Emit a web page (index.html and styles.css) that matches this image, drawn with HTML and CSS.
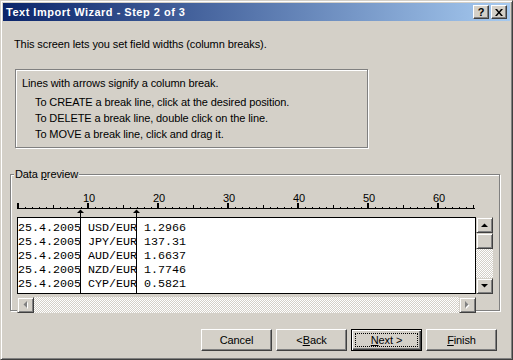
FILE: index.html
```html
<html lang="en">
  <head>
    <meta charset="utf-8">
    <title>Text Import Wizard - Step 2 of 3</title>
    <link rel="stylesheet" href="styles.css">
  </head>

  <body>
    <div class="window">
      <div class="titlebar">
        <span class="title">Text Import Wizard - Step 2 of 3</span>
        <div class="caption-buttons">
          <span class="cap-btn help">?</span>
          <span class="cap-btn close">
            <svg width="8" height="7" viewBox="0 0 8 7"><path d="M0 0h2l2 2.4 2-2.4h2l-3 3.5 3 3.5h-2l-2-2.4-2 2.4h-2l3-3.5z"/></svg>
          </span>
        </div>
      </div>

      <div class="content">
        <p class="intro">This screen lets you set field widths (column breaks).</p>

        <div class="hint-box">
          <p class="hint-head">Lines with arrows signify a column break.</p>
          <p class="hint">To CREATE a break line, click at the desired position.</p>
          <p class="hint">To DELETE a break line, double click on the line.</p>
          <p class="hint">To MOVE a break line, click and drag it.</p>
        </div>

        <fieldset class="preview-group">
          <legend>Data <u>p</u>review</legend>

          <!-- ruler: one column = 7px, col 0 at x=1 -->
          <svg class="ruler" width="458" height="33" viewBox="0 0 458 33">
            <defs>
              <pattern id="minor" patternUnits="userSpaceOnUse" x="1" y="0" width="7" height="33">
                <rect x="0" y="23" width="1" height="1"/>
              </pattern>
              <pattern id="five" patternUnits="userSpaceOnUse" x="36" y="0" width="70" height="33">
                <rect x="0" y="21" width="1" height="3"/>
              </pattern>
              <pattern id="ten" patternUnits="userSpaceOnUse" x="0" y="0" width="70" height="33">
                <rect x="0" y="19" width="2" height="5"/>
              </pattern>
            </defs>
            <rect x="0" y="0" width="458" height="33" fill="url(#minor)"/>
            <rect x="0" y="0" width="458" height="33" fill="url(#five)"/>
            <rect x="0" y="0" width="458" height="33" fill="url(#ten)"/>
            <rect x="0" y="24" width="458" height="1"/>
            <g class="ruler-num">
              <text x="72" y="18">10</text>
              <text x="142" y="18">20</text>
              <text x="212" y="18">30</text>
              <text x="282" y="18">40</text>
              <text x="352" y="18">50</text>
              <text x="422" y="18">60</text>
            </g>
            <polygon points="60,29 67,29 63.5,25.5"/>
            <rect x="63" y="29" width="1" height="4"/>
            <polygon points="116,29 123,29 119.5,25.5"/>
            <rect x="119" y="29" width="1" height="4"/>
          </svg>

          <div class="preview">
<pre class="data">25.4.2005 USD/EUR 1.2966
25.4.2005 JPY/EUR 137.31
25.4.2005 AUD/EUR 1.6637
25.4.2005 NZD/EUR 1.7746
25.4.2005 CYP/EUR 0.5821</pre>
            <div class="vscroll">
              <span class="sb-btn">
                <svg width="7" height="4" viewBox="0 0 7 4"><polygon points="0,4 7,4 3.5,0.5"/></svg>
              </span>
              <span class="sb-btn thumb"></span>
              <span class="track"></span>
              <span class="sb-btn">
                <svg width="7" height="4" viewBox="0 0 7 4"><polygon points="0,0 7,0 3.5,3.5"/></svg>
              </span>
            </div>
            <div class="hscroll">
              <span class="sb-btn">
                <svg width="5" height="8" viewBox="0 0 5 8"><polygon class="hl" points="5,1 5,8 1.5,4.5"/><polygon class="gray" points="4,0 4,7 0.5,3.5"/></svg>
              </span>
              <span class="track"></span>
              <span class="sb-btn">
                <svg width="5" height="8" viewBox="0 0 5 8"><polygon class="hl" points="1,1 1,8 4.5,4.5"/><polygon class="gray" points="0,0 0,7 3.5,3.5"/></svg>
              </span>
            </div>
          </div>
        </fieldset>

        <div class="buttons">
          <span class="btn">Cancel</span>
          <span class="btn">&lt; <u>B</u>ack</span>
          <span class="btn default"><span class="focus"><u>N</u>ext &gt;</span></span>
          <span class="btn"><u>F</u>inish</span>
        </div>
      </div>
    </div>
  </body>
</html>
```

FILE: styles.css
```css
body {
  margin: 0;
  font-family: "Liberation Sans", Arial, sans-serif;
  font-size: 11px;
  letter-spacing: -0.1px;
  color: #000;
}

* {
  box-sizing: border-box;
}

p {
  margin: 0;
}

.window {
  width: 513px;
  height: 360px;
  background: #d4d0c8;
  border: 1px solid;
  border-color: #d4d0c8 #404040 #404040 #d4d0c8;
  box-shadow: inset 1px 1px #fff, inset -1px -1px #808080;
  padding: 2px;
  display: flex;
  flex-direction: column;
}

/* title bar */
.titlebar {
  height: 18px;
  display: flex;
  align-items: center;
  padding: 0 3px 0 3px;
  background: linear-gradient(to right, #0a246a, #a6caf0);
}

.title {
  color: #fff;
  font-weight: bold;
  font-size: 11px;
  letter-spacing: 0.5px;
}

.caption-buttons {
  margin-left: auto;
  display: flex;
  gap: 2px;
}

.cap-btn {
  width: 16px;
  height: 14px;
  display: flex;
  align-items: center;
  justify-content: center;
  background: #d4d0c8;
  border: 1px solid;
  border-color: #fff #404040 #404040 #fff;
  box-shadow: inset -1px -1px #808080;
}

.cap-btn.help {
  font-weight: bold;
  font-size: 11px;
  line-height: 12px;
}

/* content */
.content {
  flex: 1;
  display: flex;
  flex-direction: column;
}

.intro {
  margin: 17px 0 0 11px;
  line-height: 13px;
}

.hint-box {
  margin: 18px 0 0 12px;
  width: 353px;
  height: 79px;
  border: 1px solid #808080;
  box-shadow: inset 1px 1px #fff, 1px 1px #fff;
  padding: 6px 0 0 6px;
}

.hint-head {
  line-height: 14px;
  margin-bottom: 4px;
}

.hint {
  line-height: 16px;
  padding-left: 13px;
}

/* data preview group */
.preview-group {
  margin: 20px 0 0 7px;
  width: 490px;
  border: 1px solid #808080;
  box-shadow: inset 1px 1px #fff, 1px 1px #fff;
  padding: 3px 0 0 6px;
  min-width: 0;
}

.preview-group legend {
  margin-left: -3px;
  padding: 0 1px;
  line-height: 13px;
  background: #d4d0c8;
}

.ruler {
  display: block;
}

.ruler-num text {
  font-family: "Liberation Sans", Arial, sans-serif;
  font-size: 11px;
  text-anchor: middle;
}

.preview {
  display: grid;
  grid-template-columns: 459px 17px;
  grid-template-rows: 77px 16px;
  row-gap: 3px;
  margin-bottom: -3px;
}

.data {
  margin: 0;
  padding: 3px 0 0 0;
  overflow: hidden;
  border: 1px solid #000;
  font-family: "Liberation Mono", "Courier New", monospace;
  font-size: 11.67px;
  letter-spacing: 0;
  line-height: 14px;
  background:
    linear-gradient(#000, #000) 62px 0 / 1px 100% no-repeat,
    linear-gradient(#000, #000) 118px 0 / 1px 100% no-repeat,
    #fff;
}

.track {
  flex: 1;
  background: repeating-conic-gradient(#fff 0 25%, #d4d0c8 0 50%) 0 0 / 2px 2px;
}

.vscroll {
  display: flex;
  flex-direction: column;
}

.vscroll .sb-btn {
  height: 16px;
}

.hscroll {
  grid-column: 1;
  display: flex;
}

.hscroll .sb-btn {
  width: 17px;
}

.hscroll .hl {
  fill: #fff;
}

.hscroll .gray {
  fill: #808080;
}

.sb-btn {
  display: flex;
  align-items: center;
  justify-content: center;
  background: #d4d0c8;
  border: 1px solid;
  border-color: #d4d0c8 #404040 #404040 #d4d0c8;
  box-shadow: inset 1px 1px #fff, inset -1px -1px #808080;
}

/* dialog buttons */
.buttons {
  margin-top: 18px;
  display: flex;
  justify-content: flex-end;
  gap: 4px;
  padding-right: 13px;
}

.btn {
  width: 71px;
  height: 22px;
  display: flex;
  align-items: center;
  justify-content: center;
  border: 1px solid;
  border-color: #fff #404040 #404040 #fff;
  box-shadow: inset -1px -1px #808080;
}

.btn.default {
  border-color: #000;
  box-shadow: inset 1px 1px #fff, inset -1px -1px #404040, inset -2px -2px #808080;
  padding: 3px;
}

.focus {
  width: 100%;
  height: 100%;
  display: flex;
  align-items: center;
  justify-content: center;
  border: 1px dotted #000;
}
```
